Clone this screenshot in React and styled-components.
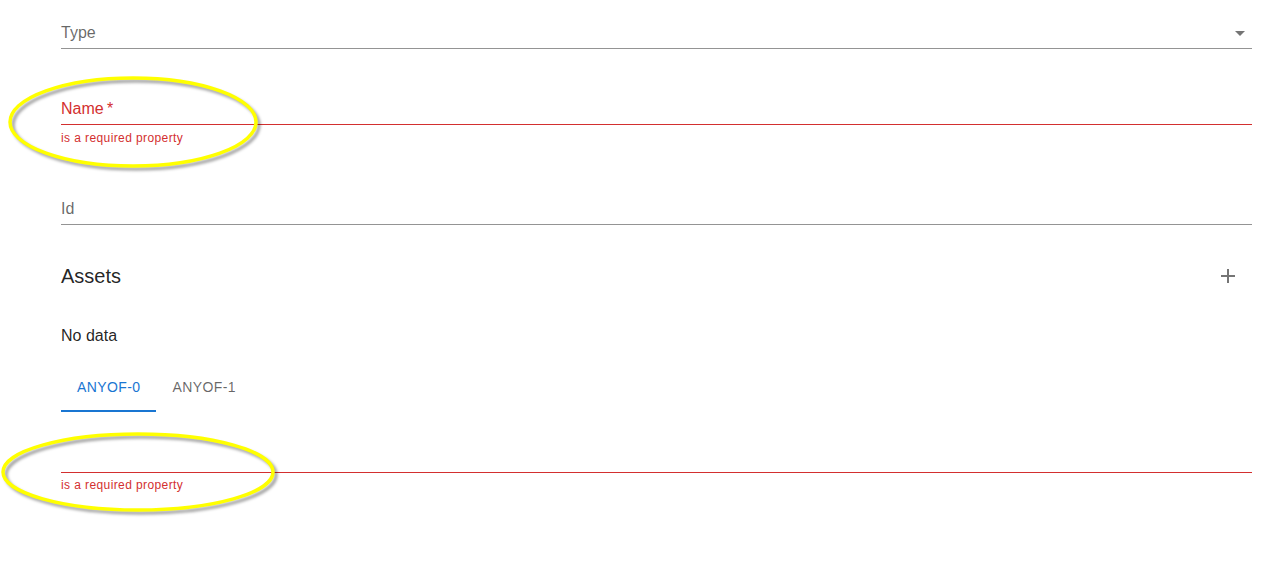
import React from "react";
import styled, { createGlobalStyle } from "styled-components";

const Global = createGlobalStyle`
  body {
    margin: 0;
    background: #fff;
    font-family: "Liberation Sans", Arial, sans-serif;
  }
`;

const Page = styled.div`
  position: relative;
  width: 1268px;
  height: 565px;
  padding: 0 16px 0 61px;
  box-sizing: border-box;
  overflow: hidden;
`;

const Field = styled.div`
  display: flex;
  align-items: center;
  padding: 23px 0 6px;
  height: 19px;
  border-bottom: 1px solid ${(p) => (p.$error ? "#d32f2f" : "#949494")};
  margin-top: ${(p) => p.$top || 0}px;
`;

const Label = styled.div`
  flex: 1;
  font-size: 16px;
  line-height: 19px;
  color: ${(p) => (p.$error ? "#d32f2f" : "rgba(0,0,0,0.6)")};
`;

const Helper = styled.div`
  font-size: 12px;
  line-height: 20px;
  letter-spacing: 0.4px;
  color: #d32f2f;
  margin-top: ${(p) => p.$top || 2}px;
`;

const SelectIcon = styled.svg`
  width: 24px;
  height: 24px;
  fill: #757575;
  margin-top: 1px;
`;

const Header = styled.div`
  display: flex;
  align-items: center;
  justify-content: space-between;
  margin-top: 35px;
  height: 32px;
`;

const Title = styled.h2`
  margin: 0;
  font-size: 20px;
  font-weight: 400;
  line-height: 32px;
  color: rgba(0, 0, 0, 0.87);
`;

const IconButton = styled.button`
  display: flex;
  align-items: center;
  justify-content: center;
  width: 40px;
  height: 40px;
  margin-right: 4px;
  padding: 0;
  border: 0;
  background: none;
  border-radius: 50%;
  cursor: pointer;
  svg {
    width: 24px;
    height: 24px;
    fill: #757575;
  }
`;

const Empty = styled.p`
  margin: 32px 0 0;
  font-size: 16px;
  line-height: 24px;
  color: rgba(0, 0, 0, 0.87);
`;

const Tabs = styled.div`
  display: flex;
  margin-top: 16px;
`;

const Tab = styled.button`
  min-width: 90px;
  height: 48px;
  padding: 13px 16px;
  border: 0;
  background: none;
  font-family: inherit;
  font-size: 14px;
  font-weight: 400;
  letter-spacing: 0.4px;
  text-transform: uppercase;
  color: ${(p) => (p.$active ? "#1976d2" : "rgba(0,0,0,0.6)")};
  border-bottom: 2px solid ${(p) => (p.$active ? "#1976d2" : "transparent")};
  box-sizing: border-box;
  cursor: pointer;
`;

const Marks = styled.svg`
  position: absolute;
  left: 0;
  top: 0;
  width: 1268px;
  height: 565px;
  pointer-events: none;
  overflow: visible;
`;

const Ring = ({ cx, cy, rx, ry }) => (
  <g>
    <ellipse cx={cx + 3} cy={cy + 3} rx={rx} ry={ry} fill="none" stroke="rgba(0,0,0,0.4)" strokeWidth="3" filter="url(#blur)" />
    <ellipse cx={cx} cy={cy} rx={rx} ry={ry} fill="none" stroke="#ffff00" strokeWidth="3.5" />
  </g>
);

export default function App() {
  return (
    <Page>
      <Global />
      <Field>
        <Label>Type</Label>
        <SelectIcon viewBox="0 0 24 24">
          <path d="M7 10l5 5 5-5z" />
        </SelectIcon>
      </Field>

      <Field $error $top={27}>
        <Label $error>Name{"\u2009"}*</Label>
      </Field>
      <Helper $top={3}>is a required property</Helper>

      <Field $top={28}>
        <Label>Id</Label>
      </Field>

      <Header>
        <Title>Assets</Title>
        <IconButton aria-label="add">
          <svg viewBox="0 0 24 24">
            <path d="M19 13h-6v6h-2v-6H5v-2h6V5h2v6h6v2z" />
          </svg>
        </IconButton>
      </Header>

      <Empty>No data</Empty>

      <Tabs>
        <Tab $active>anyOf-0</Tab>
        <Tab>anyOf-1</Tab>
      </Tabs>

      <Field $error $top={12}>
        <Label />
      </Field>
      <Helper $top={2}>is a required property</Helper>

      <Marks>
        <defs>
          <filter id="blur" x="-10%" y="-20%" width="120%" height="140%">
            <feGaussianBlur stdDeviation="1.5" />
          </filter>
        </defs>
        <Ring cx={133} cy={122} rx={123} ry={44} />
        <Ring cx={138} cy={472} rx={135} ry={38} />
      </Marks>
    </Page>
  );
}
